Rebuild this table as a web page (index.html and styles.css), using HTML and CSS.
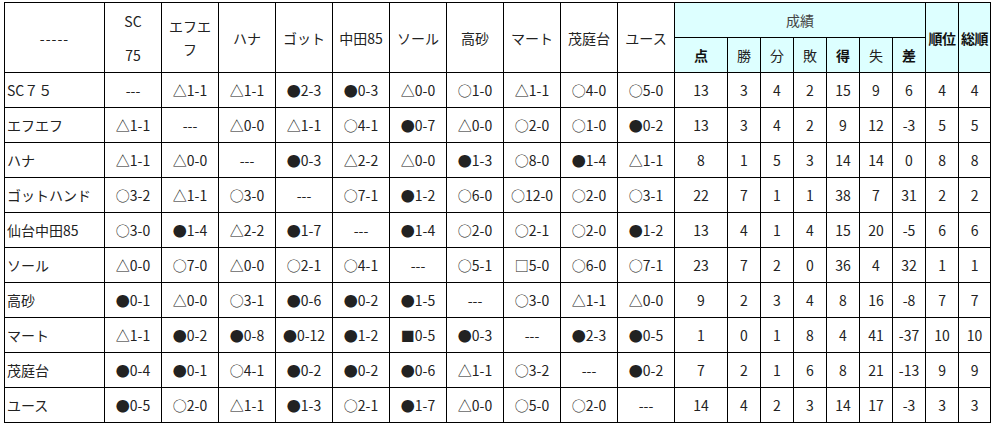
FILE: index.html
```html
<!DOCTYPE html>
<html lang="ja">
<head>
<meta charset="utf-8">
<title>星取表</title>
<link rel="stylesheet" href="styles.css">
</head>
<body>
<div class="sheet">
<table class="standings">
  <colgroup>
    <col class="c-name">
    <col class="c-team"><col class="c-team"><col class="c-team"><col class="c-team"><col class="c-team">
    <col class="c-team"><col class="c-team"><col class="c-team"><col class="c-team"><col class="c-team">
    <col class="c-pts">
    <col class="c-stat"><col class="c-stat"><col class="c-stat"><col class="c-stat"><col class="c-stat"><col class="c-stat">
    <col class="c-rank"><col class="c-total">
  </colgroup>
  <thead>
    <tr class="hrow">
      <th rowspan="2" class="corner">-----</th>
      <th rowspan="2" class="th-team two-line">SC<br>75</th>
      <th rowspan="2" class="th-team wrap">エフエフ</th>
      <th rowspan="2" class="th-team">ハナ</th>
      <th rowspan="2" class="th-team">ゴット</th>
      <th rowspan="2" class="th-team">中田85</th>
      <th rowspan="2" class="th-team">ソール</th>
      <th rowspan="2" class="th-team">高砂</th>
      <th rowspan="2" class="th-team">マート</th>
      <th rowspan="2" class="th-team">茂庭台</th>
      <th rowspan="2" class="th-team">ユース</th>
      <th colspan="7" class="th-stat th-group">成績</th>
      <th rowspan="2" class="th-stat th-bold th-tight">順位</th>
      <th rowspan="2" class="th-stat th-bold th-tight">総順</th>
    </tr>
    <tr class="hrow">
      <th class="th-stat th-bold">点</th>
      <th class="th-stat">勝</th>
      <th class="th-stat">分</th>
      <th class="th-stat">敗</th>
      <th class="th-stat th-bold">得</th>
      <th class="th-stat">失</th>
      <th class="th-stat th-bold">差</th>
    </tr>
  </thead>
  <tbody>
    <tr><td class="name">SC７５</td><td>---</td><td>△1-1</td><td>△1-1</td><td>●2-3</td><td>●0-3</td><td>△0-0</td><td>○1-0</td><td>△1-1</td><td>○4-0</td><td>○5-0</td><td>13</td><td>3</td><td>4</td><td>2</td><td>15</td><td>9</td><td>6</td><td>4</td><td>4</td></tr>
    <tr><td class="name">エフエフ</td><td>△1-1</td><td>---</td><td>△0-0</td><td>△1-1</td><td>○4-1</td><td>●0-7</td><td>△0-0</td><td>○2-0</td><td>○1-0</td><td>●0-2</td><td>13</td><td>3</td><td>4</td><td>2</td><td>9</td><td>12</td><td>-3</td><td>5</td><td>5</td></tr>
    <tr><td class="name">ハナ</td><td>△1-1</td><td>△0-0</td><td>---</td><td>●0-3</td><td>△2-2</td><td>△0-0</td><td>●1-3</td><td>○8-0</td><td>●1-4</td><td>△1-1</td><td>8</td><td>1</td><td>5</td><td>3</td><td>14</td><td>14</td><td>0</td><td>8</td><td>8</td></tr>
    <tr><td class="name">ゴットハンド</td><td>○3-2</td><td>△1-1</td><td>○3-0</td><td>---</td><td>○7-1</td><td>●1-2</td><td>○6-0</td><td>○12-0</td><td>○2-0</td><td>○3-1</td><td>22</td><td>7</td><td>1</td><td>1</td><td>38</td><td>7</td><td>31</td><td>2</td><td>2</td></tr>
    <tr><td class="name">仙台中田85</td><td>○3-0</td><td>●1-4</td><td>△2-2</td><td>●1-7</td><td>---</td><td>●1-4</td><td>○2-0</td><td>○2-1</td><td>○2-0</td><td>●1-2</td><td>13</td><td>4</td><td>1</td><td>4</td><td>15</td><td>20</td><td>-5</td><td>6</td><td>6</td></tr>
    <tr><td class="name">ソール</td><td>△0-0</td><td>○7-0</td><td>△0-0</td><td>○2-1</td><td>○4-1</td><td>---</td><td>○5-1</td><td>□5-0</td><td>○6-0</td><td>○7-1</td><td>23</td><td>7</td><td>2</td><td>0</td><td>36</td><td>4</td><td>32</td><td>1</td><td>1</td></tr>
    <tr><td class="name">高砂</td><td>●0-1</td><td>△0-0</td><td>○3-1</td><td>●0-6</td><td>●0-2</td><td>●1-5</td><td>---</td><td>○3-0</td><td>△1-1</td><td>△0-0</td><td>9</td><td>2</td><td>3</td><td>4</td><td>8</td><td>16</td><td>-8</td><td>7</td><td>7</td></tr>
    <tr><td class="name">マート</td><td>△1-1</td><td>●0-2</td><td>●0-8</td><td>●0-12</td><td>●1-2</td><td>■0-5</td><td>●0-3</td><td>---</td><td>●2-3</td><td>●0-5</td><td>1</td><td>0</td><td>1</td><td>8</td><td>4</td><td>41</td><td>-37</td><td>10</td><td>10</td></tr>
    <tr><td class="name">茂庭台</td><td>●0-4</td><td>●0-1</td><td>○4-1</td><td>●0-2</td><td>●0-2</td><td>●0-6</td><td>△1-1</td><td>○3-2</td><td>---</td><td>●0-2</td><td>7</td><td>2</td><td>1</td><td>6</td><td>8</td><td>21</td><td>-13</td><td>9</td><td>9</td></tr>
    <tr><td class="name">ユース</td><td>●0-5</td><td>○2-0</td><td>△1-1</td><td>●1-3</td><td>○2-1</td><td>●1-7</td><td>△0-0</td><td>○5-0</td><td>○2-0</td><td>---</td><td>14</td><td>4</td><td>2</td><td>3</td><td>14</td><td>17</td><td>-3</td><td>3</td><td>3</td></tr>
  </tbody>
</table>
</div>
</body>
</html>
```
FILE: styles.css
```css
html, body {
  margin: 0;
  padding: 0;
  background: #ffffff;
}

.sheet {
  padding: 2px 0 0 4px;
}

.standings {
  border-collapse: separate;
  border-spacing: 0;
  table-layout: fixed;
  width: 987px;
  border-top: 1px solid #000;
  border-left: 1px solid #000;
  font-family: "Noto Sans CJK JP", "Noto Sans", sans-serif;
  font-size: 14px;
  color: #222;
}

.c-name { width: 100px; }
.c-team { width: 57px; }
.c-pts { width: 53px; }
.c-stat { width: 33px; }
.c-rank { width: 33px; }
.c-total { width: 32px; }

.standings th,
.standings td {
  box-sizing: border-box;
  border-right: 1px solid #000;
  border-bottom: 1px solid #000;
  padding: 0;
  height: 35px;
  line-height: 1;
  text-align: center;
  vertical-align: middle;
  font-weight: normal;
  white-space: nowrap;
  overflow: hidden;
}

.standings .hrow th {
  height: 35px;
}

.corner {
  letter-spacing: 1px;
}

.two-line {
  line-height: 34px !important;
}

.standings .wrap {
  white-space: normal;
  padding: 0 3px;
  line-height: 23px;
}

.th-stat {
  background: #ddffff;
}

.th-group {
  color: #444;
}

.standings .th-bold {
  font-weight: bold;
  color: #111;
}

.th-tight {
  letter-spacing: -0.5px;
}

.standings td.name {
  text-align: left;
  padding-left: 2px;
}
```
